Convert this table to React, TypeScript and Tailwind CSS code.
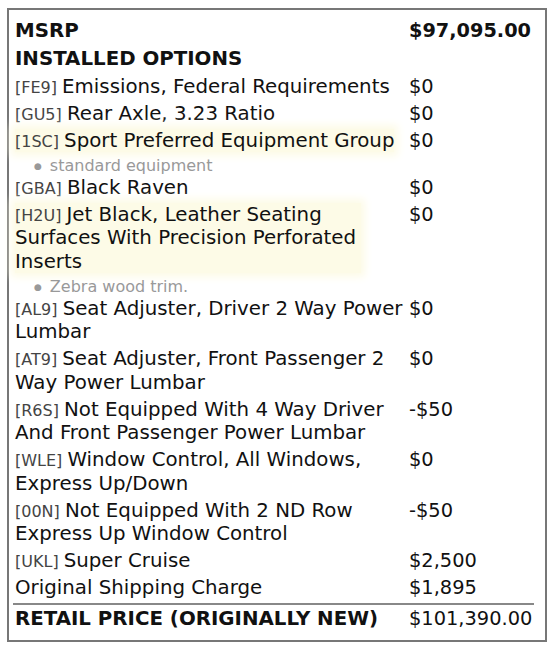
import React from "react";

type Row = {
  code?: string;
  name: string;
  price: string;
  hl?: string;
  note?: string;
};

const rows: Row[] = [
  { code: "FE9", name: "Emissions, Federal Requirements", price: "$0" },
  { code: "GU5", name: "Rear Axle, 3.23 Ratio", price: "$0" },
  { code: "1SC", name: "Sport Preferred Equipment Group", price: "$0", hl: "max-w-full", note: "standard equipment" },
  { code: "GBA", name: "Black Raven", price: "$0" },
  { code: "H2U", name: "Jet Black, Leather Seating Surfaces With Precision Perforated Inserts", price: "$0", hl: "max-w-[346px]", note: "Zebra wood trim." },
  { code: "AL9", name: "Seat Adjuster, Driver 2 Way Power Lumbar", price: "$0" },
  { code: "AT9", name: "Seat Adjuster, Front Passenger 2 Way Power Lumbar", price: "$0" },
  { code: "R6S", name: "Not Equipped With 4 Way Driver And Front Passenger Power Lumbar", price: "-$50" },
  { code: "WLE", name: "Window Control, All Windows, Express Up/Down", price: "$0" },
  { code: "00N", name: "Not Equipped With 2 ND Row Express Up Window Control", price: "-$50" },
  { code: "UKL", name: "Super Cruise", price: "$2,500" },
  { name: "Original Shipping Charge", price: "$1,895" },
];

const OptionRow: React.FC<{ row: Row }> = ({ row }) => {
  const label = (
    <>
      {row.code && <span className="text-[16px] leading-[0] text-[#444]">[{row.code}] </span>}
      {row.name}
    </>
  );
  return (
    <>
      <div className="pl-[2px] py-[1.75px]">
        {row.hl ? (
          <span className={`inline-block align-top bg-[#fdfbe7] shadow-[0_0_8px_4px_#fdfbe7] ${row.hl}`}>{label}</span>
        ) : (
          label
        )}
      </div>
      <div className="px-[2px] py-[1.75px] text-[19.4px]">{row.price}</div>
      {row.note && (
        <div className="col-span-2 h-[20px] pt-[2px] pl-[21px] text-[16px] leading-[20px] text-[#999]">
          <span className="text-[9px] mr-[8px] align-[2px]">●</span>
          {row.note}
        </div>
      )}
    </>
  );
};

export default function App() {
  return (
    <div className="bg-white w-[552px] h-[651px] pt-[8px] pl-[7px] font-['DejaVu_Sans',sans-serif] text-[#111]">
      <div className="w-[540px] h-[634px] border-2 border-[#777] pl-[4px] pt-[7.5px]">
        <div className="w-[520px] grid grid-cols-[394px_1fr] text-[19.8px] leading-[23.5px]">
          <div className="px-[2px] py-[1.75px] font-bold">MSRP</div>
          <div className="px-[2px] py-[1.75px] font-bold text-[19.3px]">$97,095.00</div>
          <div className="col-span-2 px-[2px] py-[2.5px] font-bold">INSTALLED OPTIONS</div>
          {rows.map((r) => (
            <OptionRow key={r.name} row={r} />
          ))}
          <div className="mt-[1px] border-t-2 border-[#888] px-[2px] pt-[2.5px] pb-[2px] font-bold">RETAIL PRICE (ORIGINALLY NEW)</div>
          <div className="mt-[1px] border-t-2 border-[#888] px-[2px] pt-[2.5px] pb-[2px] text-[19.4px]">$101,390.00</div>
        </div>
      </div>
    </div>
  );
}
